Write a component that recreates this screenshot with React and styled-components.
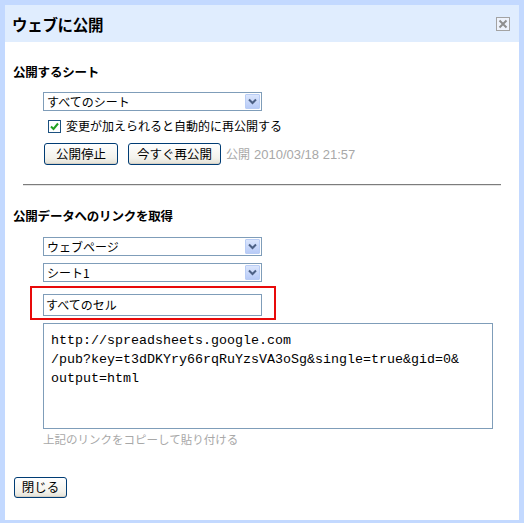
import React from "react";
import styled, { createGlobalStyle } from "styled-components";

const Global = createGlobalStyle`
  html, body { margin: 0; padding: 0; background: #fff; }
  body { font-family: "Noto Sans CJK JP", "Liberation Sans", sans-serif; color: #000; }
`;

const Dialog = styled.div`
  box-sizing: border-box;
  width: 524px;
  height: 523px;
  border: 5px solid #c3d9ff;
  border-bottom-width: 3px;
  background: #fff;
  display: flex;
  flex-direction: column;
`;

const TitleBar = styled.div`
  height: 37px;
  background: #e0edfe;
  display: flex;
  align-items: center;
  justify-content: space-between;
  padding: 0 9px 0 7px;
`;

const Title = styled.div`
  font-size: 15.5px;
  font-weight: bold;
  letter-spacing: -0.3px;
  line-height: 18px;
`;

const CloseBox = styled.div`
  box-sizing: border-box;
  width: 14px;
  height: 14px;
  border: 1px solid #a3a3a3;
  background: #eef3fc;
  display: flex;
  align-items: center;
  justify-content: center;
`;

const Content = styled.div`
  padding: 0 8px;
  display: flex;
  flex-direction: column;
`;

const Heading = styled.div`
  font-size: 12.5px;
  font-weight: bold;
  line-height: 16px;
  margin-top: ${(p) => p.$top}px;
  letter-spacing: -0.2px;
`;

const Indent = styled.div`
  margin-left: 30px;
  margin-top: ${(p) => p.$top || 0}px;
  display: flex;
  align-items: center;
`;

const SelectBox = styled.div`
  box-sizing: border-box;
  width: 219px;
  height: 19px;
  border: 1px solid #7f9db9;
  background: #fff;
  display: flex;
  align-items: center;
  justify-content: space-between;
  padding: 0 1px 0 3px;
  font-size: 12px;
  line-height: 16px;
`;

const DropButton = styled.div`
  box-sizing: border-box;
  width: 15px;
  height: 15px;
  border: 1px solid #b9cdf5;
  border-radius: 1px;
  background: linear-gradient(#dbe6fd, #b8cbf7);
  display: flex;
  align-items: center;
  justify-content: center;
`;

const CheckRow = styled.label`
  margin-left: 35px;
  margin-top: 7px;
  display: flex;
  align-items: center;
  font-size: 12px;
  line-height: 16px;
`;

const CheckBox = styled.span`
  box-sizing: border-box;
  width: 13px;
  height: 13px;
  border: 1px solid #1c5180;
  background: #fff;
  display: inline-flex;
  align-items: center;
  justify-content: center;
  margin-right: 5px;
`;

const Button = styled.button`
  box-sizing: border-box;
  width: ${(p) => p.$w}px;
  height: ${(p) => p.$h || 22}px;
  border: 1px solid #003c74;
  border-radius: 3px;
  background: linear-gradient(#ffffff, #f3f2ec 70%, #e3e1d6);
  font-family: "Noto Sans CJK JP", sans-serif;
  font-size: 12.5px;
  line-height: 16px;
  color: #000;
  padding: 0;
  margin: 0 ${(p) => p.$mr || 0}px 0 ${(p) => p.$ml || 0}px;
  box-shadow: inset 0 -1px 0 #d6d0c5;
`;

const Stamp = styled.span`
  color: #a8a8a8;
  font-size: 12px;
  margin-left: 5px;
  font-family: "Noto Sans CJK JP", sans-serif;
  line-height: 16px;
  & b {
    font-weight: normal;
    font-family: "Liberation Sans", sans-serif;
    font-size: 13px;
    margin-left: 4px;
  }
`;

const Divider = styled.div`
  margin: 19px 10px 0;
  height: 1px;
  background: #7c7c7c;
  border-bottom: 1px solid #e4e4e4;
`;

const RedFrame = styled.div`
  box-sizing: border-box;
  margin-left: 17px;
  margin-top: 4px;
  width: 246px;
  height: 34px;
  border: 2px solid #e80a0a;
  padding: 6px 0 0 11px;
`;

const TextInput = styled.div`
  box-sizing: border-box;
  width: 219px;
  height: 22px;
  border: 1px solid #7f9db9;
  font-size: 12px;
  line-height: 19px;
  padding-left: 2px;
`;

const TextArea = styled.div`
  box-sizing: border-box;
  width: 450px;
  height: 106px;
  border: 1px solid #7f9db9;
  margin-left: 30px;
  margin-top: 3px;
  padding: 7px 7px;
  font-family: "Liberation Mono", monospace;
  font-size: 13.33px;
  line-height: 19px;
  white-space: pre;
`;

const Hint = styled.div`
  margin-left: 30px;
  margin-top: 2px;
  font-size: 11.5px;
  line-height: 16px;
  color: #a8a8a8;
`;

const Footer = styled.div`
  margin-top: 26px;
  margin-left: 1px;
`;

const Chevron = () => (
  <svg width="9" height="7" viewBox="0 0 9 7">
    <path d="M1 1.5 L4.5 5 L8 1.5" fill="none" stroke="#4d6185" strokeWidth="2" />
  </svg>
);

const Select = ({ children }) => (
  <SelectBox>
    <span>{children}</span>
    <DropButton>
      <Chevron />
    </DropButton>
  </SelectBox>
);

export default function App() {
  return (
    <>
      <Global />
      <Dialog>
        <TitleBar>
          <Title>ウェブに公開</Title>
          <CloseBox>
            <svg width="10" height="10" viewBox="0 0 10 10">
              <path d="M1.5 1.5 L8.5 8.5 M8.5 1.5 L1.5 8.5" stroke="#8e8e8e" strokeWidth="2" />
            </svg>
          </CloseBox>
        </TitleBar>
        <Content>
          <Heading $top={22}>公開するシート</Heading>
          <Indent $top={12}>
            <Select>すべてのシート</Select>
          </Indent>
          <CheckRow>
            <CheckBox>
              <svg width="9" height="9" viewBox="0 0 9 9">
                <path d="M1 4.5 L3.5 7 L8 1.5" fill="none" stroke="#21a121" strokeWidth="2" />
              </svg>
            </CheckBox>
            変更が加えられると自動的に再公開する
          </CheckRow>
          <Indent $top={9}>
            <Button $w={74} $ml={1} $mr={10}>公開停止</Button>
            <Button $w={93}>今すぐ再公開</Button>
            <Stamp>
              公開<b>2010/03/18 21:57</b>
            </Stamp>
          </Indent>
          <Divider />
          <Heading $top={22}>公開データへのリンクを取得</Heading>
          <Indent $top={13}>
            <Select>ウェブページ</Select>
          </Indent>
          <Indent $top={7}>
            <Select>シート1</Select>
          </Indent>
          <RedFrame>
            <TextInput>すべてのセル</TextInput>
          </RedFrame>
          <TextArea>
            {"http://spreadsheets.google.com\n/pub?key=t3dDKYry66rqRuYzsVA3oSg&single=true&gid=0&\noutput=html"}
          </TextArea>
          <Hint>上記のリンクをコピーして貼り付ける</Hint>
          <Footer>
            <Button $w={53} $h={21}>閉じる</Button>
          </Footer>
        </Content>
      </Dialog>
    </>
  );
}
